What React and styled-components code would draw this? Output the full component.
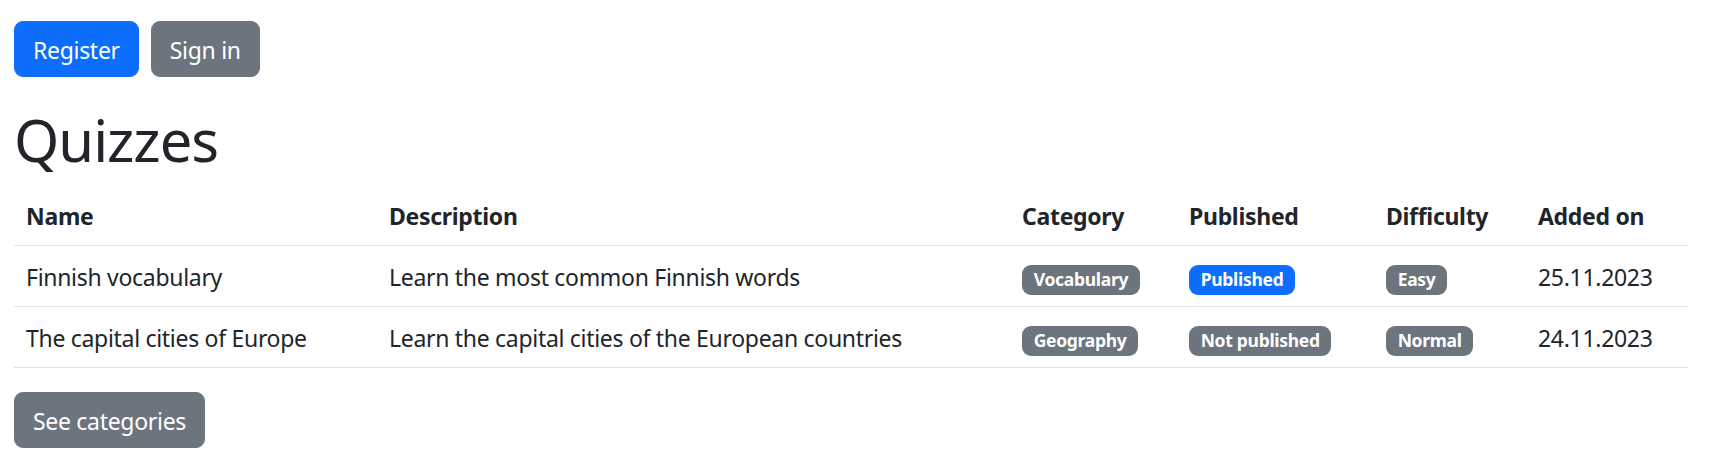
import React from "react";
import styled, { createGlobalStyle } from "styled-components";

const quizzes = [
  {
    name: "Finnish vocabulary",
    description: "Learn the most common Finnish words",
    category: "Vocabulary",
    published: true,
    difficulty: "Easy",
    added: "25.11.2023",
  },
  {
    name: "The capital cities of Europe",
    description: "Learn the capital cities of the European countries",
    category: "Geography",
    published: false,
    difficulty: "Normal",
    added: "24.11.2023",
  },
];

const columns = [
  { label: "Name", width: 363 },
  { label: "Description", width: 633 },
  { label: "Category", width: 167 },
  { label: "Published", width: 197 },
  { label: "Difficulty", width: 152 },
  { label: "Added on" },
];

const GlobalStyle = createGlobalStyle`
  body {
    margin: 0;
    background: #fff;
    color: #212529;
    font-family: "Noto Sans", "Open Sans", sans-serif;
    font-size: 23px;
    letter-spacing: -0.3px;
    line-height: 36px;
  }
`;

const Page = styled.div`
  padding: 21px 22px 0 14px;
`;

const Toolbar = styled.div`
  display: flex;
  gap: 12px;
  margin-bottom: 24px;
`;

const Button = styled.button`
  font-family: inherit;
  font-size: 23px;
  letter-spacing: -0.3px;
  line-height: 36px;
  padding: 10px 18px 8px;
  border: 1.5px solid ${({ $primary }) => ($primary ? "#0d6efd" : "#6c757d")};
  border-radius: 9px;
  background: ${({ $primary }) => ($primary ? "#0d6efd" : "#6c757d")};
  color: #fff;
  cursor: pointer;
`;

const Title = styled.h1`
  margin: 0 0 12px;
  padding-top: 3px;
  height: 72px;
  box-sizing: border-box;
  font-size: 58px;
  font-weight: 400;
  letter-spacing: -1px;
  line-height: 72px;
`;

const Table = styled.table`
  width: 100%;
  table-layout: fixed;
  border-collapse: collapse;
  margin-bottom: 24px;
  vertical-align: top;

  th,
  td {
    padding: 13px 12px 11px;
    text-align: left;
    border-bottom: 1.5px solid #dee2e6;
    white-space: nowrap;
  }

  th {
    font-weight: 700;
  }
`;

const Badge = styled.span`
  display: inline-block;
  padding: 6.3px 11.7px;
  font-size: 17.5px;
  font-weight: 700;
  letter-spacing: -0.3px;
  line-height: 1;
  color: #fff;
  border-radius: 9px;
  background: ${({ $blue }) => ($blue ? "#0d6efd" : "#6c757d")};
`;

const App = () => {
  return (
    <Page>
      <GlobalStyle />
      <Toolbar>
        <Button $primary>Register</Button>
        <Button>Sign in</Button>
      </Toolbar>
      <Title>Quizzes</Title>
      <Table>
        <colgroup>
          {columns.map((col) => (
            <col key={col.label} style={col.width ? { width: col.width } : undefined} />
          ))}
        </colgroup>
        <thead>
          <tr>
            {columns.map((col) => (
              <th key={col.label}>{col.label}</th>
            ))}
          </tr>
        </thead>
        <tbody>
          {quizzes.map((quiz) => (
            <tr key={quiz.name}>
              <td>{quiz.name}</td>
              <td>{quiz.description}</td>
              <td>
                <Badge>{quiz.category}</Badge>
              </td>
              <td>
                <Badge $blue={quiz.published}>
                  {quiz.published ? "Published" : "Not published"}
                </Badge>
              </td>
              <td>
                <Badge>{quiz.difficulty}</Badge>
              </td>
              <td>{quiz.added}</td>
            </tr>
          ))}
        </tbody>
      </Table>
      <Button>See categories</Button>
    </Page>
  );
};

export default App;
